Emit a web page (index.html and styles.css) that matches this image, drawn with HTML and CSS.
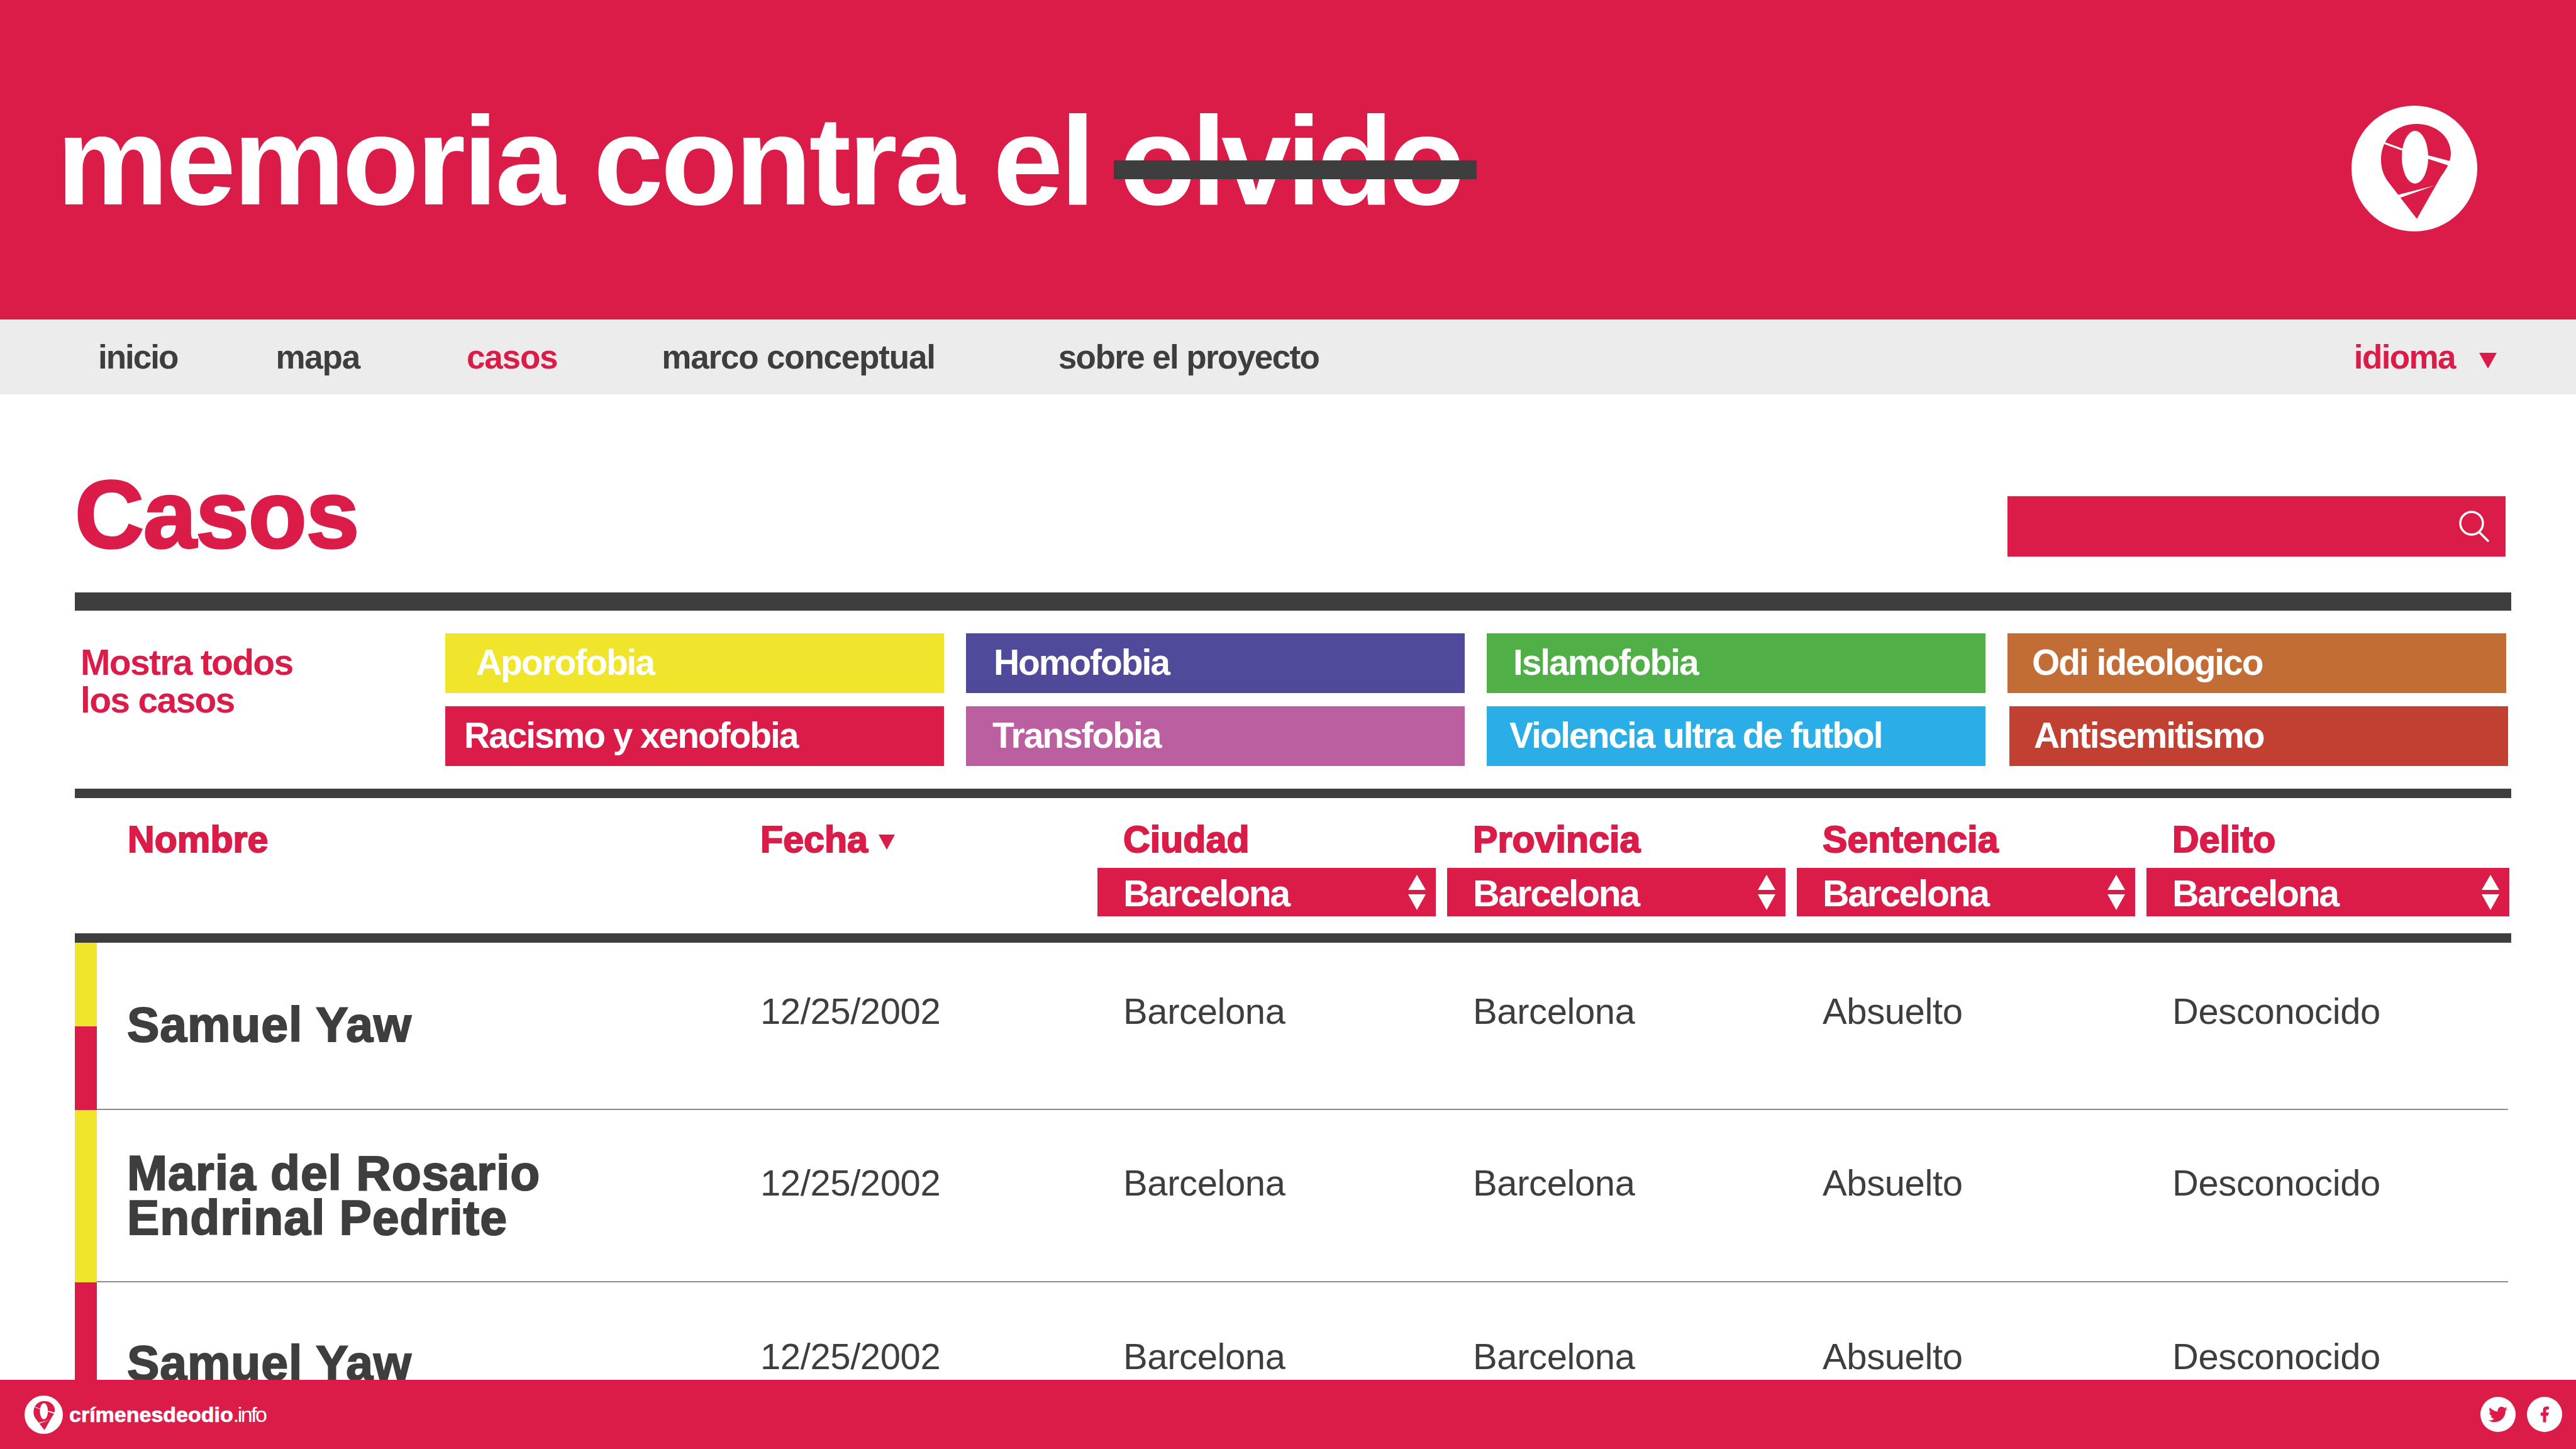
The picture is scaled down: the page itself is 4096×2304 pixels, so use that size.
FILE: index.html
```html
<!DOCTYPE html>
<html lang="es">
<head>
    <meta charset="UTF-8">
    <title>Memoria contra el olvido - Casos</title>
    <link rel="stylesheet" href="styles.css">
</head>
<body>
    <svg class="defs" width="0" height="0">
        <symbol id="logo" viewBox="0 0 200 200">
            <circle cx="100" cy="100" r="100" fill="#fff"/>
            <path d="M104 180 L59 122 C50 110 47 98 47 86 C47 52 72 29 103 29 C135 29 158 50 158 76 C158 90 150 102 142 113 Z" fill="#db1c48"/>
            <ellipse cx="101" cy="82" rx="21" ry="42" fill="#fff"/>
            <path d="M53 58 L83 69 L82 72 L52 61 Z M122 79 L160 89 L157 96 L120 84 Z M73 142 L132 127 L76 147 Z" fill="#fff"/>
        </symbol>
    </svg>

    <header class="banner">
        <h1 class="site-title">memoria contra el <span class="struck">olvido</span></h1>
        <svg class="banner-logo"><use href="#logo"/></svg>
    </header>

    <nav class="nav">
        <a class="nav-link nav-inicio">inicio</a>
        <a class="nav-link nav-mapa">mapa</a>
        <a class="nav-link nav-casos active">casos</a>
        <a class="nav-link nav-marco">marco conceptual</a>
        <a class="nav-link nav-sobre">sobre el proyecto</a>
        <a class="nav-link nav-idioma active">idioma <span class="tri tri-nav"></span></a>
    </nav>

    <main class="content">
        <div class="page-head">
            <h2 class="page-title">Casos</h2>
            <div class="search">
                <svg class="search-icon" viewBox="0 0 50 50" fill="none" stroke="#fff" stroke-width="3.5" stroke-linecap="round">
                    <circle cx="21" cy="20" r="18"/>
                    <path d="M33 34 L47 48"/>
                </svg>
            </div>
        </div>
        <div class="rule"></div>

        <section class="filters">
            <div class="show-all">Mostra todos<br>los casos</div>
            <div class="tags">
                <a class="tag tag-aporofobia">Aporofobia</a>
                <a class="tag tag-homofobia">Homofobia</a>
                <a class="tag tag-islamofobia">Islamofobia</a>
                <a class="tag tag-odi">Odi ideologico</a>
                <a class="tag tag-racismo">Racismo y xenofobia</a>
                <a class="tag tag-transfobia">Transfobia</a>
                <a class="tag tag-violencia">Violencia ultra de futbol</a>
                <a class="tag tag-antisemitismo">Antisemitismo</a>
            </div>
        </section>

        <div class="rule rule-thin"></div>

        <div class="cols table-head">
            <div class="th th-name">Nombre</div>
            <div class="th">Fecha <span class="tri tri-sort"></span></div>
            <div class="th-group">
                <div class="th">Ciudad</div>
                <div class="select">Barcelona <svg class="arrows" viewBox="0 0 28 56"><path d="M14 0 L28 24 H0 Z M0 31 H28 L14 56 Z"/></svg></div>
            </div>
            <div class="th-group">
                <div class="th">Provincia</div>
                <div class="select">Barcelona <svg class="arrows" viewBox="0 0 28 56"><path d="M14 0 L28 24 H0 Z M0 31 H28 L14 56 Z"/></svg></div>
            </div>
            <div class="th-group">
                <div class="th">Sentencia</div>
                <div class="select">Barcelona <svg class="arrows" viewBox="0 0 28 56"><path d="M14 0 L28 24 H0 Z M0 31 H28 L14 56 Z"/></svg></div>
            </div>
            <div class="th-group th-last">
                <div class="th">Delito</div>
                <div class="select">Barcelona <svg class="arrows" viewBox="0 0 28 56"><path d="M14 0 L28 24 H0 Z M0 31 H28 L14 56 Z"/></svg></div>
            </div>
        </div>
        <div class="rule rule-thin"></div>

        <div class="row row-one">
            <div class="strip"><span class="yellow"></span><span class="crimson"></span></div>
            <div class="cols row-body">
                <div class="name">Samuel Yaw</div>
                <div class="cell cell-date">12/25/2002</div>
                <div class="cell">Barcelona</div>
                <div class="cell">Barcelona</div>
                <div class="cell">Absuelto</div>
                <div class="cell">Desconocido</div>
            </div>
        </div>
        <div class="row row-two">
            <div class="strip"><span class="yellow"></span></div>
            <div class="cols row-body">
                <div class="name">Maria del Rosario<br>Endrinal Pedrite</div>
                <div class="cell cell-date">12/25/2002</div>
                <div class="cell">Barcelona</div>
                <div class="cell">Barcelona</div>
                <div class="cell">Absuelto</div>
                <div class="cell">Desconocido</div>
            </div>
        </div>
        <div class="row row-three">
            <div class="strip"><span class="crimson"></span></div>
            <div class="cols row-body">
                <div class="name">Samuel Yaw</div>
                <div class="cell cell-date">12/25/2002</div>
                <div class="cell">Barcelona</div>
                <div class="cell">Barcelona</div>
                <div class="cell">Absuelto</div>
                <div class="cell">Desconocido</div>
            </div>
        </div>
    </main>

    <footer class="footer">
        <div class="brand">
            <svg class="brand-logo"><use href="#logo"/></svg>
            <span class="brand-name">crímenesdeodio<span class="brand-tld">.info</span></span>
        </div>
        <div class="social">
            <span class="social-btn">
                <svg viewBox="0 0 24 24"><path d="M23.954 4.569c-.885.389-1.83.654-2.825.775 1.014-.611 1.794-1.574 2.163-2.723-.951.555-2.005.959-3.127 1.184-.896-.959-2.173-1.559-3.591-1.559-2.717 0-4.92 2.203-4.92 4.917 0 .39.045.765.127 1.124C7.691 8.094 4.066 6.13 1.64 3.161c-.427.722-.666 1.561-.666 2.475 0 1.71.87 3.213 2.188 4.096-.807-.026-1.566-.248-2.228-.616v.061c0 2.385 1.693 4.374 3.946 4.827-.413.111-.849.171-1.296.171-.314 0-.615-.03-.916-.086.631 1.953 2.445 3.377 4.604 3.417-1.68 1.319-3.809 2.105-6.102 2.105-.39 0-.779-.023-1.17-.067 2.189 1.394 4.768 2.209 7.557 2.209 9.054 0 13.999-7.496 13.999-13.986 0-.209 0-.42-.015-.63.961-.689 1.8-1.56 2.46-2.548l-.047-.02z"/></svg>
            </span>
            <span class="social-btn">
                <svg viewBox="0 0 24 24"><path d="M14 13.5h2.5l1-4H14v-2c0-1.03 0-2 2-2h1.5V2.14c-.326-.043-1.557-.14-2.857-.14C11.928 2 10 3.657 10 6.7v2.8H7v4h3V22h4v-8.5z"/></svg>
            </span>
        </div>
    </footer>
</body>
</html>
```

FILE: styles.css
```css
html, body {
    margin: 0;
    height: 100%;
}

body {
    display: flex;
    flex-direction: column;
    overflow: hidden;
    font-family: "Liberation Sans", Arial, sans-serif;
    color: #3e3e3e;
    background-color: #fff;
}

.defs {
    position: absolute;
}

/* Banner */
.banner {
    flex: none;
    height: 508px;
    box-sizing: border-box;
    display: flex;
    align-items: center;
    justify-content: space-between;
    padding: 0 157px 0 90px;
    background-color: #db1c48;
}

.site-title {
    margin: 4px 0 0;
    font-size: 200px;
    line-height: 230px;
    font-weight: 700;
    letter-spacing: -4.2px;
    word-spacing: -2px;
    color: #fff;
}

.struck {
    position: relative;
    margin-left: -7px;
    letter-spacing: -7.8px;
}

.struck::after {
    content: "";
    position: absolute;
    left: -9px;
    right: -26px;
    top: 111px;
    height: 30px;
    background-color: #3e3e3e;
}

.banner-logo {
    width: 200px;
    height: 200px;
    margin-top: 28px;
}

/* Nav */
.nav {
    flex: none;
    height: 119px;
    box-sizing: border-box;
    display: flex;
    align-items: center;
    padding-left: 156px;
    background-color: #ececec;
}

.nav-link {
    font-size: 53px;
    font-weight: 700;
    letter-spacing: -1.2px;
}

.nav-inicio { margin-right: 156px; letter-spacing: -2px; }
.nav-mapa { margin-right: 170px; }
.nav-casos { margin-right: 166px; }
.nav-marco { margin-right: 196px; }
.nav-sobre { letter-spacing: -1.6px; }

.nav-idioma {
    margin-left: auto;
    margin-right: 126px;
    display: flex;
    align-items: center;
    gap: 38px;
    letter-spacing: -1.6px;
}

.active {
    color: #db1c48;
}

.tri {
    display: inline-block;
    width: 0;
    height: 0;
    border-style: solid;
    border-color: #db1c48 transparent transparent;
}

.tri-nav {
    border-width: 25px 14px 0;
    margin-top: 12px;
}

.tri-sort {
    border-width: 24px 13px 0;
    margin-left: 0;
    vertical-align: 4px;
}

/* Main */
.content {
    flex: 1;
    min-height: 0;
    overflow: hidden;
    padding: 0 103px 0 119px;
}

.page-head {
    height: 315px;
    display: flex;
    justify-content: space-between;
    box-sizing: border-box;
    padding: 0 9px 0 0;
}

.page-title {
    margin: 104px 0 0;
    font-size: 152px;
    line-height: 175px;
    font-weight: 700;
    letter-spacing: -1px;
    color: #db1c48;
    -webkit-text-stroke: 3.5px #db1c48;
}

.search {
    width: 792px;
    height: 96px;
    margin-top: 162px;
    box-sizing: border-box;
    display: flex;
    align-items: center;
    justify-content: flex-end;
    padding-right: 25px;
    background-color: #db1c48;
}

.search-icon {
    width: 50px;
    height: 50px;
}

.rule {
    height: 29px;
    background-color: #3e3e3e;
}

.rule-thin {
    height: 15px;
}

/* Filters */
.filters {
    display: flex;
    padding: 36px 0;
}

.show-all {
    width: 580px;
    margin-left: 9px;
    margin-top: 16px;
    font-size: 57px;
    line-height: 60px;
    font-weight: 700;
    letter-spacing: -1.7px;
    color: #db1c48;
}

.tags {
    display: grid;
    grid-template-columns: repeat(4, 793px);
    grid-auto-rows: 95px;
    gap: 21px 35px;
}

.tag {
    display: flex;
    align-items: center;
    padding-bottom: 3px;
    box-sizing: border-box;
    font-size: 57px;
    font-weight: 700;
    letter-spacing: -2.1px;
    color: #fff;
}

.tag-aporofobia { background-color: #f0e52a; padding-left: 49px; }
.tag-homofobia { background-color: #504a9a; padding-left: 44px; }
.tag-islamofobia { background-color: #50af47; padding-left: 42px; }
.tag-odi { background-color: #c26d36; padding-left: 39px; }
.tag-racismo { background-color: #db1c48; padding-left: 30px; }
.tag-transfobia { background-color: #bb5fa0; padding-left: 42px; }
.tag-violencia { background-color: #2baee8; padding-left: 36px; }
.tag-antisemitismo { background-color: #c24032; padding-left: 39px; margin: 0 -3px 0 3px; }

/* Table */
.cols {
    display: grid;
    grid-template-columns: 1055px 536px 556px 556px 556px 1fr;
}

.table-head {
    height: 215px;
    box-sizing: border-box;
    margin-left: 35px;
    padding-top: 33px;
}

.th {
    font-size: 59px;
    line-height: 66px;
    font-weight: 700;
    letter-spacing: 0.1px;
    color: #db1c48;
    -webkit-text-stroke: 2px #db1c48;
}

.th-name {
    padding-left: 49px;
}

.th-group .th {
    padding-left: 41px;
}

.select {
    width: 538px;
    height: 77px;
    margin-top: 12px;
    box-sizing: border-box;
    display: flex;
    align-items: center;
    justify-content: space-between;
    padding: 4px 16px 0 41px;
    font-size: 59px;
    font-weight: 700;
    letter-spacing: -2.4px;
    color: #fff;
    background-color: #db1c48;
}

.th-last .select {
    width: 577px;
}

.arrows {
    width: 28px;
    height: 56px;
    margin-top: -4px;
    fill: #fff;
}

.row {
    display: flex;
}

.row-one { height: 266px; }
.row-two { height: 274px; }
.row-three { height: 256px; }

.strip {
    flex: none;
    width: 35px;
    display: flex;
    flex-direction: column;
}

.strip span {
    flex: 1;
}

.yellow { background-color: #f0e52a; }
.crimson { background-color: #db1c48; }

.row-body {
    flex: 1;
    margin-right: 5px;
    box-sizing: border-box;
    border-bottom: 2px solid #8c8c8c;
}

.row-three .row-body {
    border-bottom: none;
}

.name {
    align-self: center;
    padding-left: 48px;
    font-size: 77px;
    line-height: 71px;
    font-weight: 700;
    letter-spacing: 0.9px;
    -webkit-text-stroke: 2px #3e3e3e;
}

.row-one .name {
    margin-bottom: 4px;
}

.cell {
    padding-left: 41px;
    font-size: 58px;
    line-height: 66px;
    letter-spacing: -0.4px;
}

.cell-date {
    padding-left: 0;
}

.row-one .cell { padding-top: 76px; }
.row-two .cell { padding-top: 83px; }
.row-three .cell { padding-top: 85px; }

/* Footer */
.footer {
    flex: none;
    height: 110px;
    box-sizing: border-box;
    display: flex;
    align-items: center;
    justify-content: space-between;
    padding: 0 22px 0 39px;
    background-color: #db1c48;
    color: #fff;
}

.brand {
    display: flex;
    align-items: center;
    gap: 10px;
}

.brand-logo {
    width: 61px;
    height: 61px;
}

.brand-name {
    font-size: 34px;
    font-weight: 700;
    -webkit-text-stroke: 0.7px #fff;
}

.brand-tld {
    font-weight: 400;
    letter-spacing: -2.5px;
    -webkit-text-stroke: 0;
}

.social {
    display: flex;
    gap: 18px;
}

.social-btn {
    width: 56px;
    height: 56px;
    display: flex;
    align-items: center;
    justify-content: center;
    border-radius: 50%;
    background-color: #fff;
}

.social-btn svg {
    width: 30px;
    height: 30px;
    fill: #db1c48;
}
```
